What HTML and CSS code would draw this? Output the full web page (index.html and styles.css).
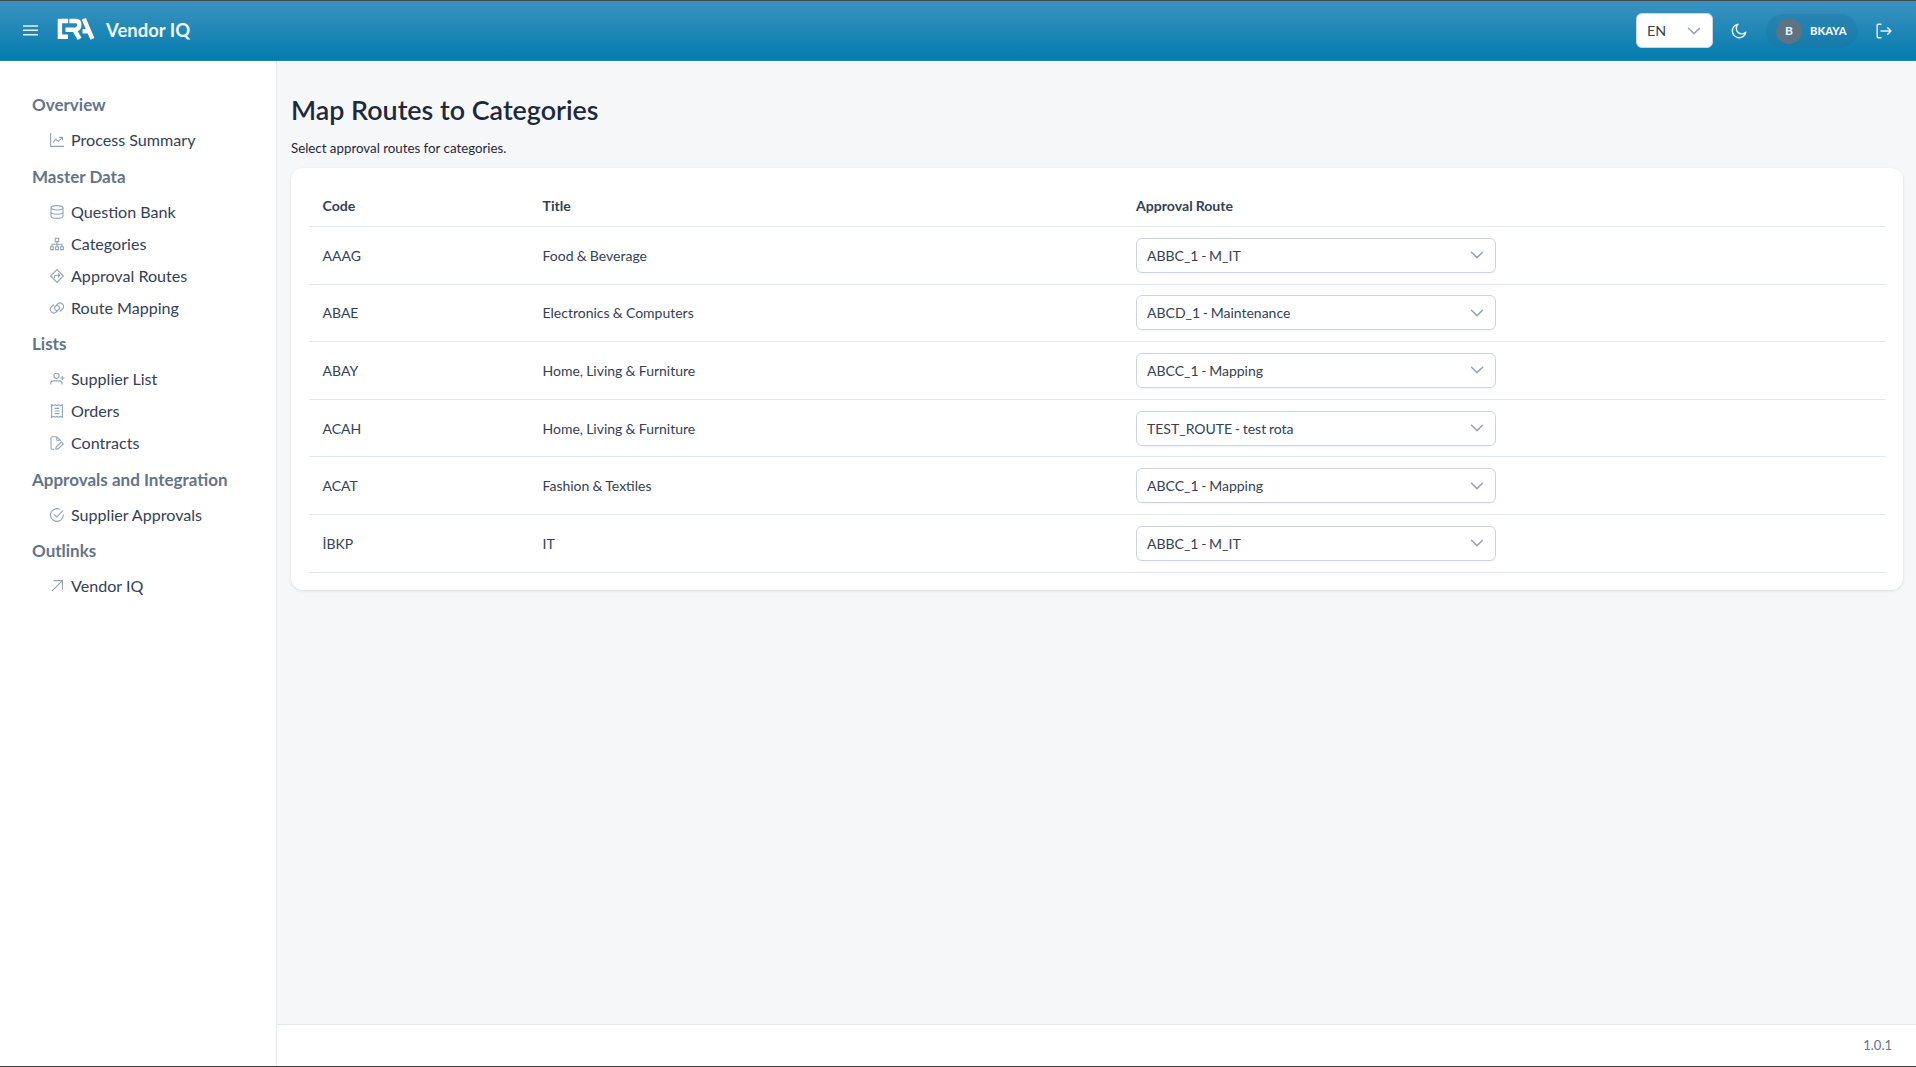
FILE: index.html
```html
<!DOCTYPE html>
<html lang="en">

<head>
    <meta charset="UTF-8">
    <meta name="viewport" content="width=device-width, initial-scale=1.0">
    <title>Vendor IQ - Route Mapping</title>
    <link rel="stylesheet" href="styles.css">
</head>

<body>
    <!-- Shared icons -->
    <svg class="icon-defs" width="0" height="0">
        <symbol id="chevron" viewBox="0 0 14 14"><path d="M1.5 4.2 L7 9.6 L12.5 4.2" /></symbol>
    </svg>

    <header class="topbar">
        <button class="menu-btn" aria-label="Menu">
            <svg width="15" height="11" viewBox="0 0 15 11"><path d="M0 1h15M0 5.3h15M0 9.7h15" /></svg>
        </button>
        <svg class="logo" width="38" height="22" viewBox="0 0 38 22">
            <path d="M11.2 3H2.9V18.8H11" />
            <path d="M12.4 3H19Q22.3 3 22.3 6.8Q22.3 11.8 17 11.8H8.5M17.5 11.8L22.6 20.8" />
            <path d="M26.8 .8L35.4 20.8M25.5 13.2H32" />
        </svg>
        <span class="brand">Vendor IQ</span>

        <div class="topbar-right">
            <div class="lang-select">
                <span>EN</span>
                <svg class="chevron" width="14" height="14"><use href="#chevron" /></svg>
            </div>
            <svg class="top-icon moon" width="16" height="16" viewBox="0 0 16 16"><path d="M7 1.2A6.8 6.8 0 1 0 14.8 9.3A5.1 5.1 0 0 1 7 1.2Z" /></svg>
            <div class="user">
                <span class="avatar">B</span>
                <span class="user-name">BKAYA</span>
            </div>
            <svg class="top-icon logout" width="16" height="16" viewBox="0 0 16 16"><path d="M5 1.2H2.2Q1.2 1.2 1.2 2.2V13.8Q1.2 14.8 2.2 14.8H5M5 8H15M11.7 4.7L15 8L11.7 11.3" /></svg>
        </div>
    </header>

    <div class="layout">
        <nav class="sidebar">
            <h4>Overview</h4>
            <a><svg viewBox="0 0 14 14"><path d="M.6 0V13.4H14M3 9.3L5.6 6.2L8.3 8.3L12.2 4.6M9.3 4.4H12.4V7.3" /></svg>Process Summary</a>

            <h4>Master Data</h4>
            <a><svg viewBox="0 0 14 14"><ellipse cx="7" cy="2.8" rx="6" ry="2.2" /><path d="M1 2.8V11.2C1 14.1 13 14.1 13 11.2V2.8M1 7C1 9.9 13 9.9 13 7" /></svg>Question Bank</a>
            <a><svg viewBox="0 0 14 14"><path d="M5.3 1.2H8.7V4.6H5.3ZM.6 9.8H3.4V12.6H.6ZM5.6 9.8H8.4V12.6H5.6ZM10.6 9.8H13.4V12.6H10.6ZM7 4.6V9.8M2 9.8V7.2H12V9.8" /></svg>Categories</a>
            <a><svg viewBox="0 0 14 14"><path d="M7 .6L13.4 7L7 13.4L.6 7ZM4.4 9.2V7.4Q4.4 6.3 5.5 6.3H9.6M8 4.4L9.8 6.3L8 8.2" /></svg>Approval Routes</a>
            <a><svg viewBox="0 0 14 14"><path d="M8.6 8.7A2.3 2.3 0 0 1 5.2 5.5L7.6 3.1A3.5 3.5 0 0 1 12.6 8L10 10.5M5.4 5.3A2.3 2.3 0 0 1 8.8 8.5L6.4 10.9A3.5 3.5 0 0 1 1.4 6L4 3.5" /></svg>Route Mapping</a>

            <h4>Lists</h4>
            <a><svg viewBox="0 0 14 14"><circle cx="6.5" cy="3.8" r="2.6" /><path d="M.7 12.6V11.5Q.7 8.9 3.5 8.9H9.3Q12.1 8.9 12.1 11.5V12.6M12.3 4V8M10.3 6H14.3" /></svg>Supplier List</a>
            <a><svg viewBox="0 0 14 14"><path d="M1.6 .8L3.5 1.6L5.3 .8L7 1.6L8.7 .8L10.5 1.6L12.4 .8V13.2L10.5 12.4L8.7 13.2L7 12.4L5.3 13.2L3.5 12.4L1.6 13.2ZM4.6 4.4H9M4.6 7H9.4M4.6 9.6H9.4" /></svg>Orders</a>
            <a><svg viewBox="0 0 14 14"><path d="M4.5 13.2H2Q1 13.2 1 12.2V1.7Q1 .7 2 .7H6.8L10.4 4.3V5.2M6.8 .7V4.3H10.4M5.8 13.2L6.2 11L11.3 6L13.2 7.9L8 12.9Z" /></svg>Contracts</a>

            <h4>Approvals and Integration</h4>
            <a><svg viewBox="0 0 14 14"><path d="M13.3 6.4V7A6.4 6.4 0 1 1 9.6 1.2M4.2 6.4L6.8 9L13 2.6" /></svg>Supplier Approvals</a>

            <h4>Outlinks</h4>
            <a><svg viewBox="0 0 14 14"><path d="M1.8 12.2L12.2 1.8M3.5 1.6H12.4V10.5" /></svg>Vendor IQ</a>
        </nav>

        <div class="content">
            <main>
                <h1>Map Routes to Categories</h1>
                <p class="subtitle">Select approval routes for categories.</p>

                <div class="card">
                    <div class="row row-head">
                        <span>Code</span>
                        <span>Title</span>
                        <span>Approval Route</span>
                    </div>
                    <div class="row">
                        <span>AAAG</span>
                        <span>Food &amp; Beverage</span>
                        <div class="select"><span>ABBC_1 - M_IT</span><svg class="chevron" width="14" height="14"><use href="#chevron" /></svg></div>
                    </div>
                    <div class="row">
                        <span>ABAE</span>
                        <span>Electronics &amp; Computers</span>
                        <div class="select"><span>ABCD_1 - Maintenance</span><svg class="chevron" width="14" height="14"><use href="#chevron" /></svg></div>
                    </div>
                    <div class="row">
                        <span>ABAY</span>
                        <span>Home, Living &amp; Furniture</span>
                        <div class="select"><span>ABCC_1 - Mapping</span><svg class="chevron" width="14" height="14"><use href="#chevron" /></svg></div>
                    </div>
                    <div class="row">
                        <span>ACAH</span>
                        <span>Home, Living &amp; Furniture</span>
                        <div class="select"><span>TEST_ROUTE - test rota</span><svg class="chevron" width="14" height="14"><use href="#chevron" /></svg></div>
                    </div>
                    <div class="row">
                        <span>ACAT</span>
                        <span>Fashion &amp; Textiles</span>
                        <div class="select"><span>ABCC_1 - Mapping</span><svg class="chevron" width="14" height="14"><use href="#chevron" /></svg></div>
                    </div>
                    <div class="row">
                        <span>İBKP</span>
                        <span>IT</span>
                        <div class="select"><span>ABBC_1 - M_IT</span><svg class="chevron" width="14" height="14"><use href="#chevron" /></svg></div>
                    </div>
                </div>
            </main>
            <footer>1.0.1</footer>
        </div>
    </div>
</body>

</html>
```
FILE: styles.css
```css
* {
    box-sizing: border-box;
}

body {
    margin: 0;
    height: 100vh;
    display: flex;
    flex-direction: column;
    font-family: Lato, sans-serif;
    font-size: 14px;
    color: #334155;
    background-color: #f5f7f9;
    border-top: 1px solid #45494f;
    border-bottom: 1px solid #3a3d42;
    overflow: hidden;
}

svg {
    fill: none;
    flex-shrink: 0;
}

.icon-defs {
    position: absolute;
}

/* Top bar */
.topbar {
    height: 60px;
    flex-shrink: 0;
    display: flex;
    align-items: center;
    padding: 0 24px 0 23px;
    background: linear-gradient(#3c92bf, #047cae);
    border-bottom: 1px solid #2487b4;
    color: #f1f5f9;
}

.menu-btn {
    display: flex;
    padding: 0;
    border: none;
    background: none;
    margin-right: 19px;
}

.menu-btn svg {
    stroke: #e8f1f6;
    stroke-width: 1.4;
}

.logo {
    stroke: #fff;
    stroke-width: 4.4;
    margin-top: -3px;
}

.brand {
    margin: -2px 0 0 11px;
    font-size: 18.5px;
    font-weight: 700;
}

.topbar-right {
    margin-left: auto;
    display: flex;
    align-items: center;
}

.lang-select {
    width: 77px;
    height: 35px;
    display: flex;
    align-items: center;
    justify-content: space-between;
    padding: 0 11px 0 10px;
    border: 1px solid #cbd5e1;
    border-radius: 6px;
    background-color: #fff;
    color: #334155;
    font-size: 14.3px;
}

.chevron {
    stroke: #94a3b8;
    stroke-width: 1.5;
    stroke-linecap: round;
}

.top-icon {
    stroke: #e8f1f6;
    stroke-width: 1.4;
    stroke-linejoin: round;
    stroke-linecap: round;
}

.moon {
    margin-left: 18px;
}

.user {
    display: flex;
    align-items: center;
    width: 91px;
    height: 34px;
    margin: 0 19px 0 19px;
    padding-left: 10px;
    border-radius: 17px;
    background-color: rgba(30, 116, 160, 0.35);
}

.avatar {
    width: 26px;
    height: 26px;
    border-radius: 50%;
    background-color: #5b7383;
    font-size: 12px;
    font-weight: 700;
    line-height: 25px;
    text-align: center;
}

.user-name {
    margin-left: 8px;
    font-size: 11.2px;
    font-weight: 900;
}

/* Sidebar */
.layout {
    flex: 1;
    display: flex;
    min-height: 0;
}

.sidebar {
    width: 277px;
    flex-shrink: 0;
    padding: 23px 0 0 32px;
    background-color: #fff;
    border-right: 1px solid #e6e9ee;
    font-size: 16.1px;
}

.sidebar h4 {
    height: 39.6px;
    margin: 0;
    font-size: 17px;
    font-weight: 700;
    line-height: 41.6px;
    color: #64748b;
}

.sidebar a {
    height: 32px;
    display: flex;
    align-items: center;
    gap: 7px;
    padding-left: 18px;
}

.sidebar svg {
    width: 14px;
    height: 14px;
    margin-top: 1px;
    stroke: #94a3b8;
    stroke-width: 1.1;
    overflow: visible;
}

/* Content */
.content {
    flex: 1;
    display: flex;
    flex-direction: column;
}

main {
    flex: 1;
    padding: 32px 13px 0 14px;
}

h1 {
    margin: 0;
    font-size: 26.85px;
    font-weight: 600;
    line-height: 34px;
    color: #1e293b;
}

.subtitle {
    margin: 12px 0 11px;
    font-size: 13.3px;
    line-height: 18px;
    color: #1e293b;
}

.card {
    height: 422px;
    padding: 18px 17px 0 18px;
    background-color: #fff;
    border-radius: 12px;
    box-shadow: 0 1px 3px rgba(0, 0, 0, 0.12);
}

.row {
    display: grid;
    grid-template-columns: 220px 593.5px 360px;
    align-items: center;
    height: 57.6px;
    padding-left: 13.5px;
    border-bottom: 1px solid #e2e8f0;
    word-spacing: -0.4px;
}

.row-head {
    height: 41px;
    padding-bottom: 2px;
    font-size: 14.1px;
    font-weight: 700;
}

.select {
    height: 35px;
    display: flex;
    align-items: center;
    justify-content: space-between;
    padding: 0 11px 0 10px;
    border: 1px solid #cbd5e1;
    border-radius: 6px;
    box-shadow: 0 1px 2px rgba(18, 18, 23, 0.05);
    word-spacing: -0.9px;
}

footer {
    height: 42px;
    padding-right: 24px;
    border-top: 1px solid #e6e9ee;
    background-color: #fff;
    color: #64748b;
    font-size: 13px;
    line-height: 41px;
    text-align: right;
}
```
